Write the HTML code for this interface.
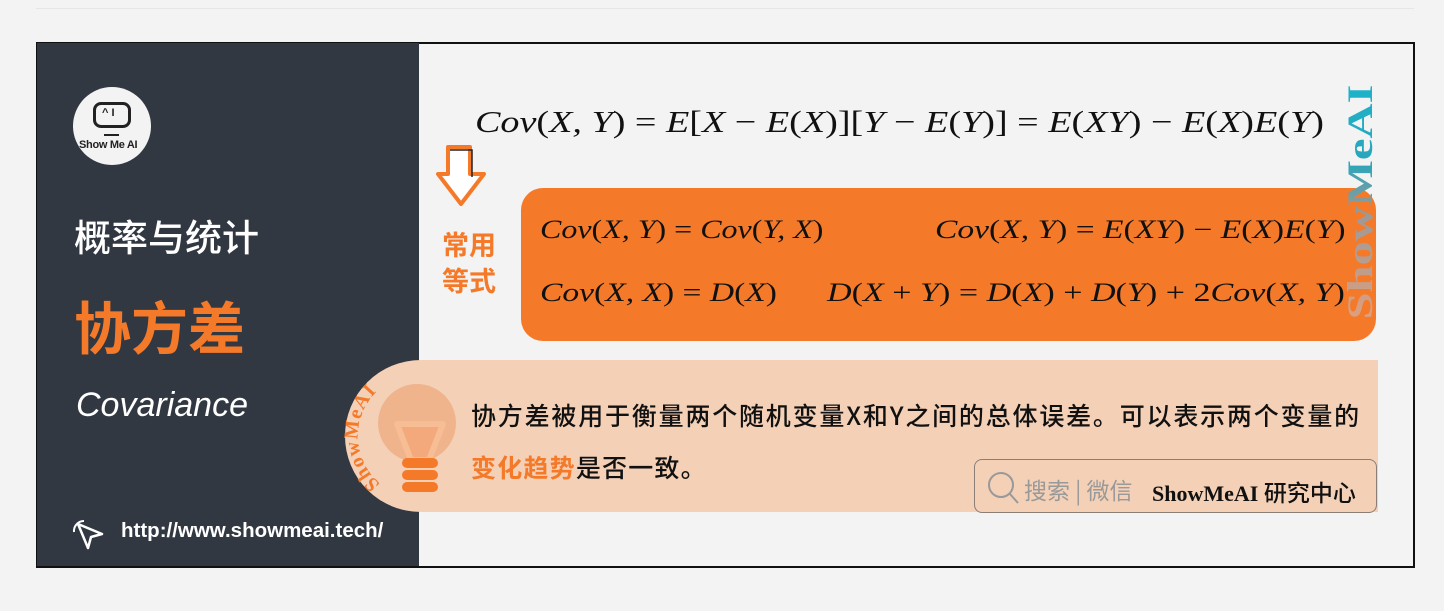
<!DOCTYPE html>
<html><head><meta charset="utf-8"><style>
*{margin:0;padding:0;box-sizing:border-box}
body{width:1444px;height:611px;background:#f3f3f3;position:relative;overflow:hidden;font-family:"Liberation Sans","Noto Sans CJK SC",sans-serif}
.a{position:absolute}
.m{font-family:"Liberation Serif","DejaVu Serif",serif;font-style:italic;color:#111;white-space:nowrap;transform-origin:0 50%}
.m b{font-style:normal;font-weight:normal}
.cjk{font-family:"Noto Sans CJK SC",sans-serif}
</style></head><body>
<div class="a" style="left:36px;top:8px;width:1378px;height:1px;background:#e6e6e6"></div>
<div class="a" style="left:36px;top:42px;width:1379px;height:526px;border:2px solid #111;background:#f3f3f3"></div>
<div class="a" style="left:37px;top:43px;width:382px;height:523px;background:#323842"></div>
<!-- logo -->
<div class="a" style="left:73px;top:87px;width:78px;height:78px;border-radius:50%;background:#f3f3f3"></div>
<div class="a" style="left:93px;top:102px;width:38px;height:26px;border:3px solid #222;border-radius:8px"></div>
<div class="a" style="left:102px;top:107px;font-size:11px;font-weight:bold;color:#222">^ I</div>
<div class="a" style="left:104px;top:134px;width:15px;height:2px;background:#222"></div>
<div class="a" style="left:79px;top:139px;font-size:11px;font-weight:bold;color:#222;letter-spacing:-0.3px">Show Me AI</div>
<div class="a cjk" style="left:74px;top:208px;font-size:37px;color:#fff;font-weight:500">概率与统计</div>
<div class="a cjk" style="left:74px;top:290px;font-size:57px;font-weight:bold;color:#f47a2a;line-height:70px">协方差</div>
<div class="a" style="left:76px;top:386px;font-size:34px;font-style:italic;color:#fff">Covariance</div>
<svg class="a" style="left:72px;top:518px" width="36" height="34" viewBox="0 0 36 34"><path d="M6 6 L30 16 L19 19 L16 30 Z" fill="none" stroke="#fff" stroke-width="2.5" stroke-linejoin="round"/><path d="M2 14 A10 10 0 0 1 12 3" fill="none" stroke="#fff" stroke-width="2"/></svg>
<div class="a" style="left:121px;top:519px;font-size:20.5px;font-weight:bold;color:#fff">http://www.showmeai.tech/</div>
<!-- top formula -->
<div class="a m" style="left:475px;top:104px;font-size:31px;transform:scaleX(1.23)">Cov<b>(</b>X, Y<b>) = </b>E<b>[</b>X <b>−</b> E<b>(</b>X<b>)][</b>Y <b>−</b> E<b>(</b>Y<b>)] = </b>E<b>(</b>XY<b>) −</b> E<b>(</b>X<b>)</b>E<b>(</b>Y<b>)</b></div>
<!-- arrow -->
<svg class="a" style="left:434px;top:144px" width="60" height="66" viewBox="0 0 60 66"><path d="M14 3 H36 V30 H50 L27 60 L4 30 H14 Z" fill="#fff" stroke="#f47a2a" stroke-width="4" stroke-linejoin="round"/><path d="M16 6 L38 6 L38 33" fill="none" stroke="#222" stroke-width="1.5"/></svg>
<div class="a cjk" style="left:442px;top:226px;font-size:27px;font-weight:bold;color:#f47a2a;line-height:36px">常用<br>等式</div>
<!-- orange box -->
<div class="a" style="left:521px;top:188px;width:855px;height:153px;background:#f47a2a;border-radius:22px"></div>
<div class="a m" style="left:540px;top:215px;font-size:26px;transform:scaleX(1.23)">Cov<b>(</b>X, Y<b>) = </b>Cov<b>(</b>Y, X<b>)</b></div>
<div class="a m" style="left:935px;top:215px;font-size:26px;transform:scaleX(1.29)">Cov<b>(</b>X, Y<b>) = </b>E<b>(</b>XY<b>) −</b> E<b>(</b>X<b>)</b>E<b>(</b>Y<b>)</b></div>
<div class="a m" style="left:540px;top:278px;font-size:26px;transform:scaleX(1.29)">Cov<b>(</b>X, X<b>) = </b>D<b>(</b>X<b>)</b></div>
<div class="a m" style="left:827px;top:278px;font-size:26px;transform:scaleX(1.31)">D<b>(</b>X <b>+</b> Y<b>) = </b>D<b>(</b>X<b>) + </b>D<b>(</b>Y<b>) + 2</b>Cov<b>(</b>X, Y<b>)</b></div>
<!-- vertical watermark -->
<div class="a" style="left:1262px;top:182px;width:196px;height:40px;text-align:center;transform:rotate(-90deg) scale(1.35,1);font-family:'Liberation Serif',serif;font-weight:bold;font-size:36px;line-height:40px;background:linear-gradient(to right,#e9a07a,#9a9a9a 45%,#2aa5bb 65%,#1ab6cc);-webkit-background-clip:text;background-clip:text;color:transparent;white-space:nowrap">ShowMeAI</div>
<!-- peach band -->
<div class="a" style="left:345px;top:360px;width:1033px;height:152px;background:#f4d0b7;border-radius:76px 0 0 76px"></div>
<div class="a" style="left:378px;top:384px;width:78px;height:78px;border-radius:50%;background:#f0b48d"></div>
<svg class="a" style="left:385px;top:420px" width="70" height="80" viewBox="0 0 70 80"><path d="M12 4 H58 L44 40 H26 Z" fill="#f3a97c" stroke="#f7bd95" stroke-width="6" stroke-linejoin="round"/><rect x="17" y="38" width="36" height="10" rx="5" fill="#f47a2a"/><rect x="17" y="50" width="36" height="10" rx="5" fill="#f47a2a"/><rect x="17" y="62" width="36" height="10" rx="5" fill="#f47a2a"/></svg>
<svg class="a" style="left:340px;top:362px" width="120" height="150" viewBox="0 0 120 150"><path id="c" d="M42 123 A62 62 0 0 1 80 12" fill="none"/><text font-family="Liberation Serif,serif" font-weight="bold" font-size="20" fill="#f47a2a" letter-spacing="1"><textPath href="#c" startOffset="2">ShowMeAI</textPath></text></svg>
<div class="a cjk" style="left:471px;top:397px;font-size:25px;letter-spacing:1.8px;color:#111;white-space:nowrap;font-weight:500">协方差被用于衡量两个随机变量X和Y之间的总体误差。可以表示两个变量的</div>
<div class="a cjk" style="left:471px;top:449px;font-size:25px;letter-spacing:1.2px;color:#111;font-weight:500"><span style="color:#f47a2a;font-weight:bold">变化趋势</span>是否一致。</div>
<!-- search box -->
<div class="a" style="left:974px;top:459px;width:403px;height:54px;border:1.5px solid #8a7e76;border-radius:8px"></div>
<svg class="a" style="left:986px;top:470px" width="34" height="36" viewBox="0 0 34 36"><circle cx="15" cy="15" r="12" fill="none" stroke="#999" stroke-width="2"/><path d="M24 24 L32 33" stroke="#999" stroke-width="2"/></svg>
<div class="a cjk" style="left:1024px;top:472px;font-size:23px;color:#999;white-space:nowrap">搜索 | 微信</div>
<div class="a" style="left:1152px;top:474px;font-size:22px;font-weight:bold;color:#111;font-family:'Liberation Serif',serif;white-space:nowrap">ShowMeAI <span class="cjk" style="font-size:23px;font-weight:500">研究中心</span></div>
</body></html>
